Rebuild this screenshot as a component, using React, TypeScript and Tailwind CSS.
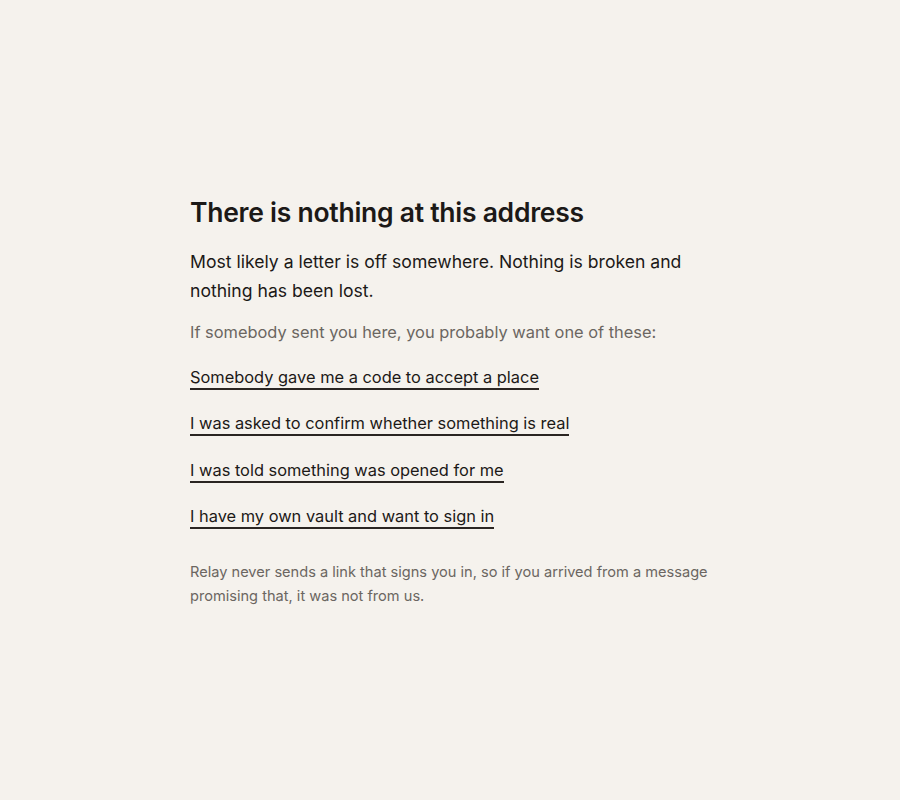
const links = [
  "Somebody gave me a code to accept a place",
  "I was asked to confirm whether something is real",
  "I was told something was opened for me",
  "I have my own vault and want to sign in",
];

export default function App() {
  return (
    <div className="min-h-screen bg-[#f5f2ed] flex items-center justify-center font-['Inter',sans-serif] text-[#1c1917]">
      <main className="w-[520px] pt-[4px]">
        <h1 className="text-[26.5px] leading-[32px] font-semibold tracking-[-0.01em]">
          There is nothing at this address
        </h1>
        <p className="mt-[19px] text-[17.6px] leading-[29px]">
          Most likely a letter is off somewhere. Nothing is broken and nothing has been lost.
        </p>
        <p className="mt-[14px] text-[16.4px] leading-[26px] text-[#6b6661]">
          If somebody sent you here, you probably want one of these:
        </p>
        <ul className="mt-[22px] flex flex-col gap-[23.5px]">
          {links.map((label) => (
            <li key={label}>
              <a
                href="#"
                className="block w-fit text-[16.4px] leading-[21px] border-b-2 border-[#2a2522]"
              >
                {label}
              </a>
            </li>
          ))}
        </ul>
        <p className="mt-[31px] text-[14.6px] leading-[24px] text-[#6b6661]">
          Relay never sends a link that signs you in, so if you arrived from a message promising that, it was not from us.
        </p>
      </main>
    </div>
  );
}
